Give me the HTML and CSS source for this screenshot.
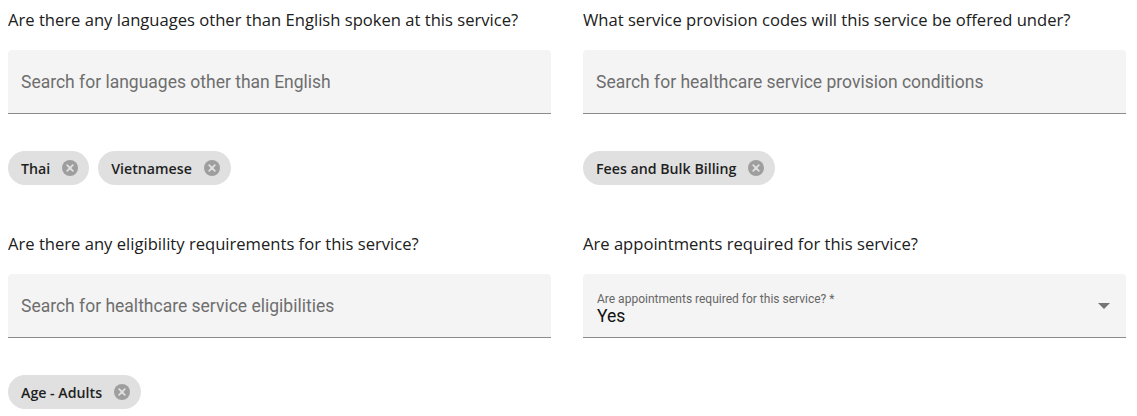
FILE: index.html
```html
<!DOCTYPE html>
<html lang="en">
<head>
<meta charset="utf-8">
<link rel="stylesheet" href="styles.css">
</head>
<body>
<div class="form">
  <section class="group">
    <p class="question">Are there any languages other than English spoken at this service?</p>
    <div class="field"><span class="placeholder">Search for languages other than English</span></div>
    <div class="chips">
      <span class="chip">Thai<svg class="x" viewBox="0 0 16 16"><circle cx="8" cy="8" r="8" fill="#9e9e9e"/><path d="M5.2 5.2 10.8 10.8M10.8 5.2 5.2 10.8" stroke="#e0e0e0" stroke-width="1.8" stroke-linecap="round"/></svg></span>
      <span class="chip">Vietnamese<svg class="x" viewBox="0 0 16 16"><circle cx="8" cy="8" r="8" fill="#9e9e9e"/><path d="M5.2 5.2 10.8 10.8M10.8 5.2 5.2 10.8" stroke="#e0e0e0" stroke-width="1.8" stroke-linecap="round"/></svg></span>
    </div>
  </section>
  <section class="group">
    <p class="question">What service provision codes will this service be offered under?</p>
    <div class="field"><span class="placeholder">Search for healthcare service provision conditions</span></div>
    <div class="chips">
      <span class="chip">Fees and Bulk Billing<svg class="x" viewBox="0 0 16 16"><circle cx="8" cy="8" r="8" fill="#9e9e9e"/><path d="M5.2 5.2 10.8 10.8M10.8 5.2 5.2 10.8" stroke="#e0e0e0" stroke-width="1.8" stroke-linecap="round"/></svg></span>
    </div>
  </section>
  <section class="group">
    <p class="question">Are there any eligibility requirements for this service?</p>
    <div class="field"><span class="placeholder">Search for healthcare service eligibilities</span></div>
    <div class="chips">
      <span class="chip">Age - Adults<svg class="x" viewBox="0 0 16 16"><circle cx="8" cy="8" r="8" fill="#9e9e9e"/><path d="M5.2 5.2 10.8 10.8M10.8 5.2 5.2 10.8" stroke="#e0e0e0" stroke-width="1.8" stroke-linecap="round"/></svg></span>
    </div>
  </section>
  <section class="group">
    <p class="question">Are appointments required for this service?</p>
    <div class="field select">
      <div class="select-text">
        <span class="float-label">Are appointments required for this service? *</span>
        <span class="value">Yes</span>
      </div>
      <svg class="arrow" viewBox="0 0 12 6"><path d="M0 0h12L6 6z" fill="#757575"/></svg>
    </div>
  </section>
</div>
</body>
</html>
```

FILE: styles.css
```css
* { box-sizing: border-box; }
body {
  margin: 8px;
  background: #fff;
  color: #212121;
}
.form {
  display: grid;
  grid-template-columns: 543px 543px;
  grid-template-rows: 224px auto;
  column-gap: 32px;
}
.question {
  margin: 0;
  height: 42px;
  padding-top: 0;
  font-family: "Open Sans", "Noto Sans", sans-serif;
  font-size: 16.6px;
  line-height: 24px;
  color: #202020;
}
.field {
  height: 64px;
  background: #f4f4f4;
  border-radius: 4px 4px 0 0;
  border-bottom: 1px solid #8c8c8c;
  display: flex;
  align-items: center;
  padding: 0 13px;
}
.placeholder {
  font-family: Roboto, sans-serif;
  font-size: 17.5px;
  color: #6e6e6e;
  padding-top: 1px;
}
.chips {
  display: flex;
  gap: 9px;
  margin-top: 37px;
}
.chip {
  display: inline-flex;
  align-items: center;
  height: 34px;
  padding: 0 11px 0 13px;
  background: #e0e0e0;
  border-radius: 17px;
  font-family: "Open Sans", "Noto Sans", sans-serif;
  font-weight: 600;
  font-size: 14.2px;
  color: #1f1f1f;
}
.x {
  width: 16px;
  height: 16px;
  margin-left: 12px;
}
.select {
  justify-content: space-between;
  padding: 0 16px 0 14px;
}
.select-text {
  display: flex;
  flex-direction: column;
  padding-top: 6px;
}
.float-label {
  font-family: Roboto, sans-serif;
  font-size: 12px;
  line-height: 14px;
  color: #666;
}
.value {
  font-family: Roboto, sans-serif;
  font-size: 17.5px;
  line-height: 20px;
  color: #111;
}
.arrow {
  width: 12px;
  height: 6px;
}
```
